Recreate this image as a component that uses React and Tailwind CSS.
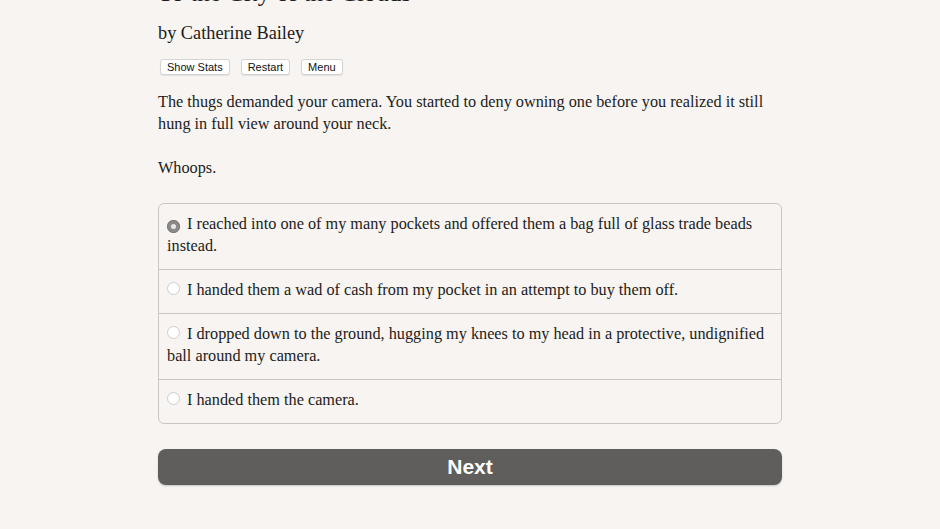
import { useState } from 'react';

const choices = [
  'I reached into one of my many pockets and offered them a bag full of glass trade beads instead.',
  'I handed them a wad of cash from my pocket in an attempt to buy them off.',
  'I dropped down to the ground, hugging my knees to my head in a protective, undignified ball around my camera.',
  'I handed them the camera.',
];

function Radio({ checked }) {
  return checked ? (
    <span className="inline-flex w-[13px] h-[13px] rounded-full bg-[#8d8b89] items-center justify-center align-[0px] mr-[7px] shadow-[inset_0_0_0_1px_#7a7876]">
      <span className="w-[5px] h-[5px] rounded-full bg-[#e9e7e5]" />
    </span>
  ) : (
    <span className="inline-block w-[13px] h-[13px] rounded-full bg-white border border-[#cfcccb] align-[0px] mr-[7px]" />
  );
}

export default function App() {
  const [picked, setPicked] = useState(0);

  return (
    <div className="min-h-[529px] bg-[#f7f4f1] text-[#1d1c1b] font-['Liberation_Serif',serif] overflow-hidden">
      <div className="w-[624px] ml-[158px]">
        <h1 className="text-[25px] leading-[30px] -mt-[22px]">To the City of the Clouds</h1>
        <p className="text-[18.3px] leading-[24px] mt-[13px]">by Catherine Bailey</p>

        <div className="flex gap-[11px] mt-[14px] ml-[2px] font-['Liberation_Sans',sans-serif]">
          {['Show Stats', 'Restart', 'Menu'].map(b => (
            <button
              key={b}
              className="h-[16px] px-[6px] text-[11px] leading-[14px] bg-white border border-[#d6d3d1] rounded-[3px] shadow-[0_1px_1px_rgba(0,0,0,0.08)] text-[#111]"
            >
              {b}
            </button>
          ))}
        </div>

        <div className="text-[16.25px] leading-[22px]">
          <p className="mt-[16px]">
            The thugs demanded your camera. You started to deny owning one before you realized it still hung in full view around your neck.
          </p>
          <p className="mt-[22px]">Whoops.</p>

          <div className="mt-[24px] border border-[#c9c6c4] rounded-[6px] overflow-hidden">
            {choices.map((c, i) => (
              <div
                key={i}
                onClick={() => setPicked(i)}
                className={`px-[8px] pt-[9px] pb-[12px] cursor-pointer ${i > 0 ? 'border-t border-[#c9c6c4]' : ''}`}
              >
                <Radio checked={picked === i} />
                {c}
              </div>
            ))}
          </div>
        </div>

        <button className="mt-[25px] w-full h-[36px] rounded-[8px] bg-[#5f5e5c] text-white font-['Liberation_Sans',sans-serif] font-bold text-[21px] shadow-[0_1px_2px_rgba(0,0,0,0.2)]">
          Next
        </button>
      </div>
    </div>
  );
}
